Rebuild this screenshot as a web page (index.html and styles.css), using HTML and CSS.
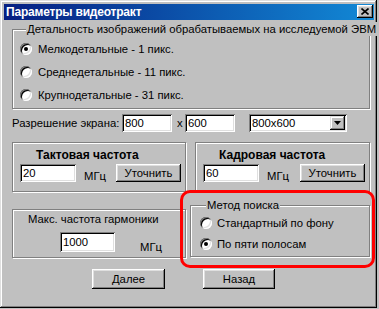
FILE: index.html
```html
<!DOCTYPE html>
<html lang="ru">
<head>
    <meta charset="UTF-8">
    <title>Параметры видеотракт</title>
    <link rel="stylesheet" href="styles.css">
</head>
<body>
    <div class="window">
        <div class="titlebar">
            <span class="title">Параметры видеотракт</span>
            <span class="close-btn">
                <svg width="8" height="7" viewBox="0 0 8 7"><path d="M0.5 0.5L7.5 6.5M7.5 0.5L0.5 6.5" stroke="#000" stroke-width="1.6" fill="none"/></svg>
            </span>
        </div>

        <div class="content">
            <fieldset class="group detail">
                <legend>Детальность изображений обрабатываемых на исследуемой ЭВМ</legend>
                <div class="radio-row"><span class="radio checked"></span>Мелкодетальные - 1 пикс.</div>
                <div class="radio-row"><span class="radio"></span>Среднедетальные - 11 пикс.</div>
                <div class="radio-row"><span class="radio"></span>Крупнодетальные - 31 пикс.</div>
            </fieldset>

            <div class="res-row">
                <span class="res-label">Разрешение экрана:</span>
                <span class="field res-field">800</span>
                <span class="res-x">x</span>
                <span class="field res-field">600</span>
                <span class="field combo">
                    <span class="combo-text">800x600</span>
                    <span class="combo-btn">
                        <svg width="7" height="4" viewBox="0 0 7 4"><path d="M0 0H7L3.5 4Z" fill="#000"/></svg>
                    </span>
                </span>
            </div>

            <div class="freq-row">
                <div class="panel freq">
                    <div class="panel-title">Тактовая частота</div>
                    <div class="freq-line">
                        <span class="field freq-field">20</span>
                        <span class="unit">МГц</span>
                        <span class="btn refine">Уточнить</span>
                    </div>
                </div>
                <div class="panel freq frame-freq">
                    <div class="panel-title">Кадровая частота</div>
                    <div class="freq-line">
                        <span class="field freq-field">60</span>
                        <span class="unit">МГц</span>
                        <span class="btn refine">Уточнить</span>
                    </div>
                </div>
            </div>

            <div class="lower-row">
                <div class="panel harm">
                    <div class="harm-title">Макс. частота гармоники</div>
                    <div class="harm-line">
                        <span class="field harm-field">1000</span>
                        <span class="unit harm-unit">МГц</span>
                    </div>
                </div>
                <fieldset class="group method">
                    <legend>Метод поиска</legend>
                    <div class="radio-row"><span class="radio"></span>Стандартный по фону</div>
                    <div class="radio-row"><span class="radio checked"></span>По пяти полосам</div>
                </fieldset>
            </div>

            <div class="actions">
                <span class="btn action">Далее</span>
                <span class="btn action back">Назад</span>
            </div>
        </div>

        <div class="highlight"></div>
    </div>
</body>
</html>
```

FILE: styles.css
```css
body { margin: 0; background: #c0c0c0; font-family: "Liberation Sans", Arial, sans-serif; font-size: 11.3px; line-height: 14px; color: #000; white-space: nowrap; }

.window { position: relative; width: 377px; height: 308px; box-sizing: border-box; padding: 4px 3px 0 4px; background: #c0c0c0;
    box-shadow: inset -1px -1px #000, inset 1px 1px #dfdfdf, inset -2px -2px #808080, inset 2px 2px #fff; }

.titlebar { display: flex; align-items: flex-start; height: 16px; background: linear-gradient(to right, #061f82, #1289d6); }
.title { flex-grow: 1; padding-left: 2px; color: #fff; font-size: 12px; font-weight: bold; letter-spacing: -0.2px; line-height: 16px; }
.close-btn { display: flex; align-items: center; justify-content: center; width: 16px; height: 13px; margin: 1px 1px 0 0; background: #c0c0c0;
    box-shadow: inset -1px -1px #000, inset 1px 1px #fff, inset -2px -2px #808080, inset 2px 2px #dfdfdf; }
.close-btn svg { display: block; }

.content { padding-left: 8px; }

/* etched frames */
.group { margin: 0; padding: 0; min-width: 0; box-sizing: border-box; border: 1px solid #808080; box-shadow: 1px 1px 0 #fff, inset 1px 1px 0 #fff; }
.group legend { margin-left: 6px; padding: 0 1px; background: #c0c0c0; line-height: 14px; }
.panel { box-sizing: border-box; border: 1px solid #808080; box-shadow: 1px 1px 0 #fff, inset 1px 1px 0 #fff; }

.detail { width: 358px; margin-top: 2px; padding: 1px 0 2px 7px; }
.detail .radio-row { height: 23px; gap: 6px; }

.radio-row { display: flex; align-items: center; }
.radio { display: flex; align-items: center; justify-content: center; flex-shrink: 0; width: 12px; height: 12px; border-radius: 50%; background: #fff;
    box-shadow: inset 1px 1px #808080, inset -1px -1px #fff, inset 2px 2px #000, inset -2px -2px #dfdfdf; }
.radio.checked::after { content: ""; width: 4px; height: 4px; border-radius: 50%; background: #000; }

/* sunken inputs */
.field { display: flex; align-items: center; flex-shrink: 0; box-sizing: border-box; height: 18px; padding-left: 3px; background: #fff;
    box-shadow: inset 1px 1px #808080, inset -1px -1px #fff, inset 2px 2px #000, inset -2px -2px #dfdfdf; }

.res-row { display: flex; align-items: center; height: 18px; margin-top: 5px; }
.res-label { width: 110px; flex-shrink: 0; }
.res-field { width: 50px; }
.res-x { width: 8px; padding-left: 5px; }
.combo { width: 98px; margin-left: 14px; padding-right: 2px; }
.combo-text { flex-grow: 1; }
.combo-btn { display: flex; align-items: center; justify-content: center; width: 15px; height: 14px; background: #c0c0c0;
    box-shadow: inset -1px -1px #000, inset 1px 1px #dfdfdf, inset -2px -2px #808080, inset 2px 2px #fff; }
.combo-btn svg { display: block; }

/* raised buttons */
.btn { display: flex; align-items: center; justify-content: center; flex-shrink: 0; box-sizing: border-box; background: #c0c0c0;
    box-shadow: inset -1px -1px #000, inset 1px 1px #fff, inset -2px -2px #808080, inset 2px 2px #dfdfdf; }

.freq-row { display: flex; gap: 9px; margin-top: 10px; }
.freq { width: 174px; height: 50px; }
.frame-freq { width: 175px; }
.panel-title { padding: 5px 0 0 23px; font-size: 12px; font-weight: bold; }
.freq-line { display: flex; align-items: center; margin-top: 2px; padding: 0 4px 0 7px; }
.freq-field { width: 56px; }
.unit { align-self: flex-end; margin: 0 0 -1px 8px; }
.refine { width: 65px; height: 18px; margin-left: auto; }

.lower-row { display: flex; align-items: flex-start; }
.harm { width: 174px; height: 49px; margin-top: 17px; }
.harm-title { padding: 2px 0 0 15px; }
.harm-line { display: flex; align-items: center; margin-top: 6px; padding-left: 47px; }
.harm-field { width: 55px; height: 20px; }
.harm-unit { margin: 0 0 -2px 25px; }

.method { width: 180px; margin: 6px 0 0 4px; padding: 0 0 2px 9px; }
.method .radio-row { height: 21px; gap: 5px; }

.actions { display: flex; gap: 38px; margin-top: 11px; padding-left: 80px; }
.action { width: 73px; height: 20px; }
.back { width: 72px; }

/* red annotation drawn over the dialog */
.highlight { position: absolute; left: 180px; top: 190px; width: 195px; height: 78px; box-sizing: border-box; border: 3px solid #f00; border-radius: 10px; }
```
